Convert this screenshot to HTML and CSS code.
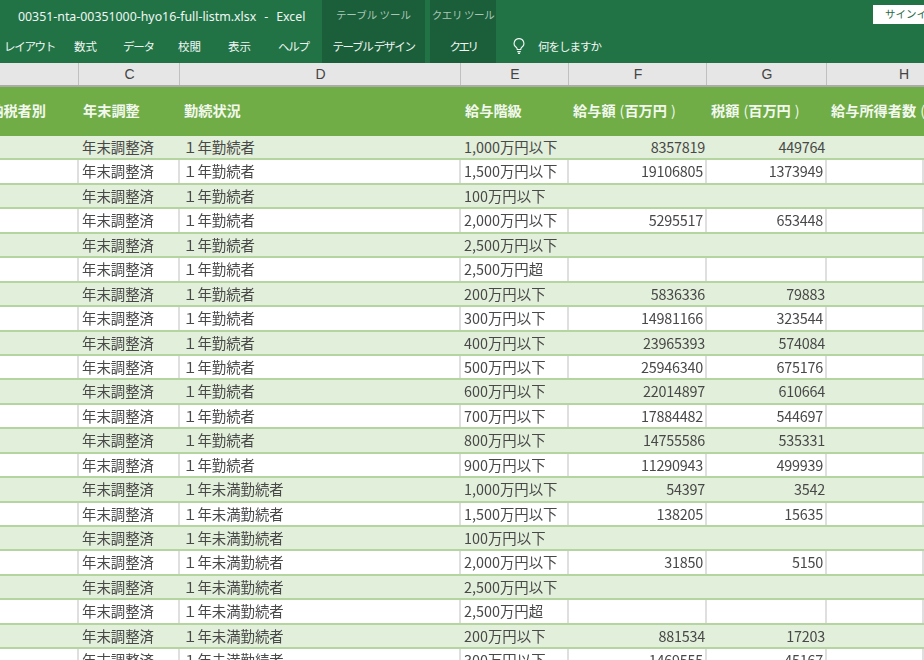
FILE: index.html
```html
<!DOCTYPE html>
<html lang="ja">
<head>
    <meta charset="UTF-8">
    <title>00351-nta-00351000-hyo16-full-listm.xlsx - Excel</title>
    <link rel="stylesheet" href="styles.css">
</head>
<body>
    <div class="ribbon">
        <div class="ribbon-main">
            <div class="title">00351-nta-00351000-hyo16-full-listm.xlsx<span class="title-sep">-</span>Excel</div>
            <div class="tabs">
                <span class="tab tab-layout kana">レイアウト</span>
                <span class="tab tab-formula">数式</span>
                <span class="tab tab-data kana">データ</span>
                <span class="tab tab-review">校閲</span>
                <span class="tab tab-view">表示</span>
                <span class="tab tab-help kana">ヘルプ</span>
            </div>
        </div>
        <div class="tool tool-table">
            <div class="tool-name">テーブル ツール</div>
            <div class="tool-tab kana">テーブル デザイン</div>
        </div>
        <div class="tool tool-query">
            <div class="tool-name">クエリ ツール</div>
            <div class="tool-tab kana">クエリ</div>
        </div>
        <div class="ribbon-rest">
            <div class="signin-row"><span class="signin">サインイン</span></div>
            <div class="tell-me">
                <svg class="bulb" viewBox="0 0 16 20">
                    <path d="M8 1.500a5.500 5.500 0 0 0-3.200 10c.8.600 1.200 1.400 1.200 2.500h4c0-1.100.4-1.900 1.200-2.500A5.500 5.500 0 0 0 8 1.500z"/>
                    <path d="M6 16.500h4M6.800 18.500h2.400"/>
                </svg>
                <span class="tell-text">何をしますか</span>
            </div>
        </div>
    </div>

    <div class="col-heads">
        <div class="col-head"></div>
        <div class="col-head">C</div>
        <div class="col-head">D</div>
        <div class="col-head">E</div>
        <div class="col-head">F</div>
        <div class="col-head">G</div>
        <div class="col-head">H</div>
    </div>

    <div class="table-head">
        <div class="th th-cut">納税者別</div>
        <div class="th">年末調整</div>
        <div class="th">勤続状況</div>
        <div class="th">給与階級</div>
        <div class="th">給与額<span class="paren">(</span>百万円<span class="paren">)</span></div>
        <div class="th">税額<span class="paren">(</span>百万円<span class="paren">)</span></div>
        <div class="th">給与所得者数<span class="paren">(</span></div>
    </div>

    <div id="rows" class="rows"></div>

    <script src="rows.js"></script>
</body>
</html>
```

FILE: styles.css
```css
* {
    margin: 0;
    padding: 0;
    box-sizing: border-box;
}

html, body {
    height: 100%;
}

body {
    width: 924px;
    height: 660px;
    overflow: hidden;
    background: #ffffff;
    font-family: "Noto Sans CJK JP", "Liberation Sans", sans-serif;
    color: #484848;
    filter: blur(0.3px);
}

.ribbon {
    height: 63px;
    background: #217346;
    color: #f2f7f4;
    display: flex;
    font-size: 11.5px;
}

.ribbon-main {
    width: 322px;
    flex-shrink: 0;
}

.title {
    height: 36px;
    padding: 8px 0 0 18px;
    font-family: "Noto Sans", sans-serif;
    font-size: 12.35px;
    white-space: nowrap;
    overflow: hidden;
}

.title-sep {
    margin: 0 8px;
}

.tabs {
    display: flex;
    white-space: nowrap;
    padding-top: 2px;
}

.tab {
    flex-shrink: 0;
}

.kana {
    letter-spacing: -1.3px;
}

.tab-layout { width: 74px; padding-left: 4px; }
.tab-formula { width: 49px; }
.tab-data { width: 55px; }
.tab-review { width: 50px; }
.tab-view { width: 50px; }
.tab-help { width: 44px; }

.tool {
    background: #1b5e3a;
    flex-shrink: 0;
    text-align: center;
    white-space: nowrap;
}

.tool-table {
    width: 103px;
}

.tool-query {
    width: 66px;
    margin-left: 5px;
}

.tool-name {
    height: 36px;
    padding-top: 7px;
    font-size: 10.5px;
    color: #a9c6b5;
}

.tool-query .tool-name {
    letter-spacing: -0.4px;
}

.tool-tab {
    padding-top: 2px;
}

.tool-query .tool-tab {
    letter-spacing: -2.5px;
}

.ribbon-rest {
    flex-grow: 1;
    min-width: 0;
    overflow: hidden;
}

.signin-row {
    height: 36px;
    padding: 5px 0 0 377px;
    white-space: nowrap;
}

.signin {
    display: block;
    height: 19px;
    width: 60px;
    padding: 1px 0 0 12px;
    background: #ffffff;
    color: #2a6b48;
    font-size: 10.5px;
}

.tell-me {
    display: flex;
    align-items: center;
    gap: 12px;
    padding: 1px 0 0 16px;
}

.tell-text {
    letter-spacing: -1px;
}

.bulb {
    width: 14px;
    height: 18px;
    fill: none;
    stroke: #f2f7f4;
    stroke-width: 1.3;
    flex-shrink: 0;
}

.col-heads,
.table-head,
.row {
    display: grid;
    grid-template-columns: 79px 101px 281px 108px 138px 120px 97px;
}

.col-heads {
    grid-template-columns: 79px 101px 281px 108px 138px 120px 154px;
    width: 924px;
    overflow: hidden;
    height: 24px;
    background: #e6e6e6;
    border-bottom: 2px solid #ababab;
    font-family: "Liberation Sans", sans-serif;
    font-size: 14px;
    color: #444444;
}

.col-head {
    padding-left: 1px;
    text-align: center;
    line-height: 22px;
    border-right: 1px solid #c0c0c0;
}

.table-head {
    height: 49px;
    background: #70ad47;
    color: #f3f8ef;
    font-size: 14.2px;
    font-weight: 700;
    white-space: nowrap;
    overflow: hidden;
}

.th {
    padding: 13px 0 0 4px;
    overflow: hidden;
}

.th-cut {
    display: flex;
    justify-content: flex-end;
    padding: 13px 33px 0 0;
}

.paren {
    padding-left: 4px;
    font-weight: 400;
}

.rows {
    display: grid;
    grid-auto-rows: 24.45px;
}

.row {
    border-bottom: 2px solid #b5d5a0;
    font-size: 14.4px;
    line-height: 22px;
    white-space: nowrap;
}

.row:nth-child(odd) {
    background: #e2efda;
}

.row:nth-child(even) .cell {
    border-right: 2px solid #dfdfdf;
}

.cell {
    padding-left: 3px;
    overflow: hidden;
}

.num {
    padding: 0 2px 0 0;
    text-align: right;
    letter-spacing: -0.25px;
}
```

FILE: rows.js
```js
const grades = ['1,000万円以下', '1,500万円以下', '100万円以下', '2,000万円以下', '2,500万円以下', '2,500万円超',
    '200万円以下', '300万円以下', '400万円以下', '500万円以下', '600万円以下', '700万円以下', '800万円以下', '900万円以下'];

const oneYear = [
    [8357819, 449764], [19106805, 1373949], ['', ''], [5295517, 653448], ['', ''], ['', ''], [5836336, 79883],
    [14981166, 323544], [23965393, 574084], [25946340, 675176], [22014897, 610664], [17884482, 544697],
    [14755586, 535331], [11290943, 499939]
];
const underOne = [
    [54397, 3542], [138205, 15635], ['', ''], [31850, 5150], ['', ''], ['', ''], [881534, 17203], [1469555, 45167]
];

const rows = document.getElementById('rows');

function addRow(status, grade, pay, tax) {
    const row = document.createElement('div');
    row.className = 'row';
    const cells = ['', '年末調整済', status, grade, pay, tax, ''];
    cells.forEach((text, i) => {
        const cell = document.createElement('div');
        cell.className = i === 4 || i === 5 ? 'cell num' : 'cell';
        cell.textContent = text;
        row.appendChild(cell);
    });
    rows.appendChild(row);
}

oneYear.forEach((v, i) => addRow('１年勤続者', grades[i], v[0], v[1]));
underOne.forEach((v, i) => addRow('１年未満勤続者', grades[i], v[0], v[1]));
```
